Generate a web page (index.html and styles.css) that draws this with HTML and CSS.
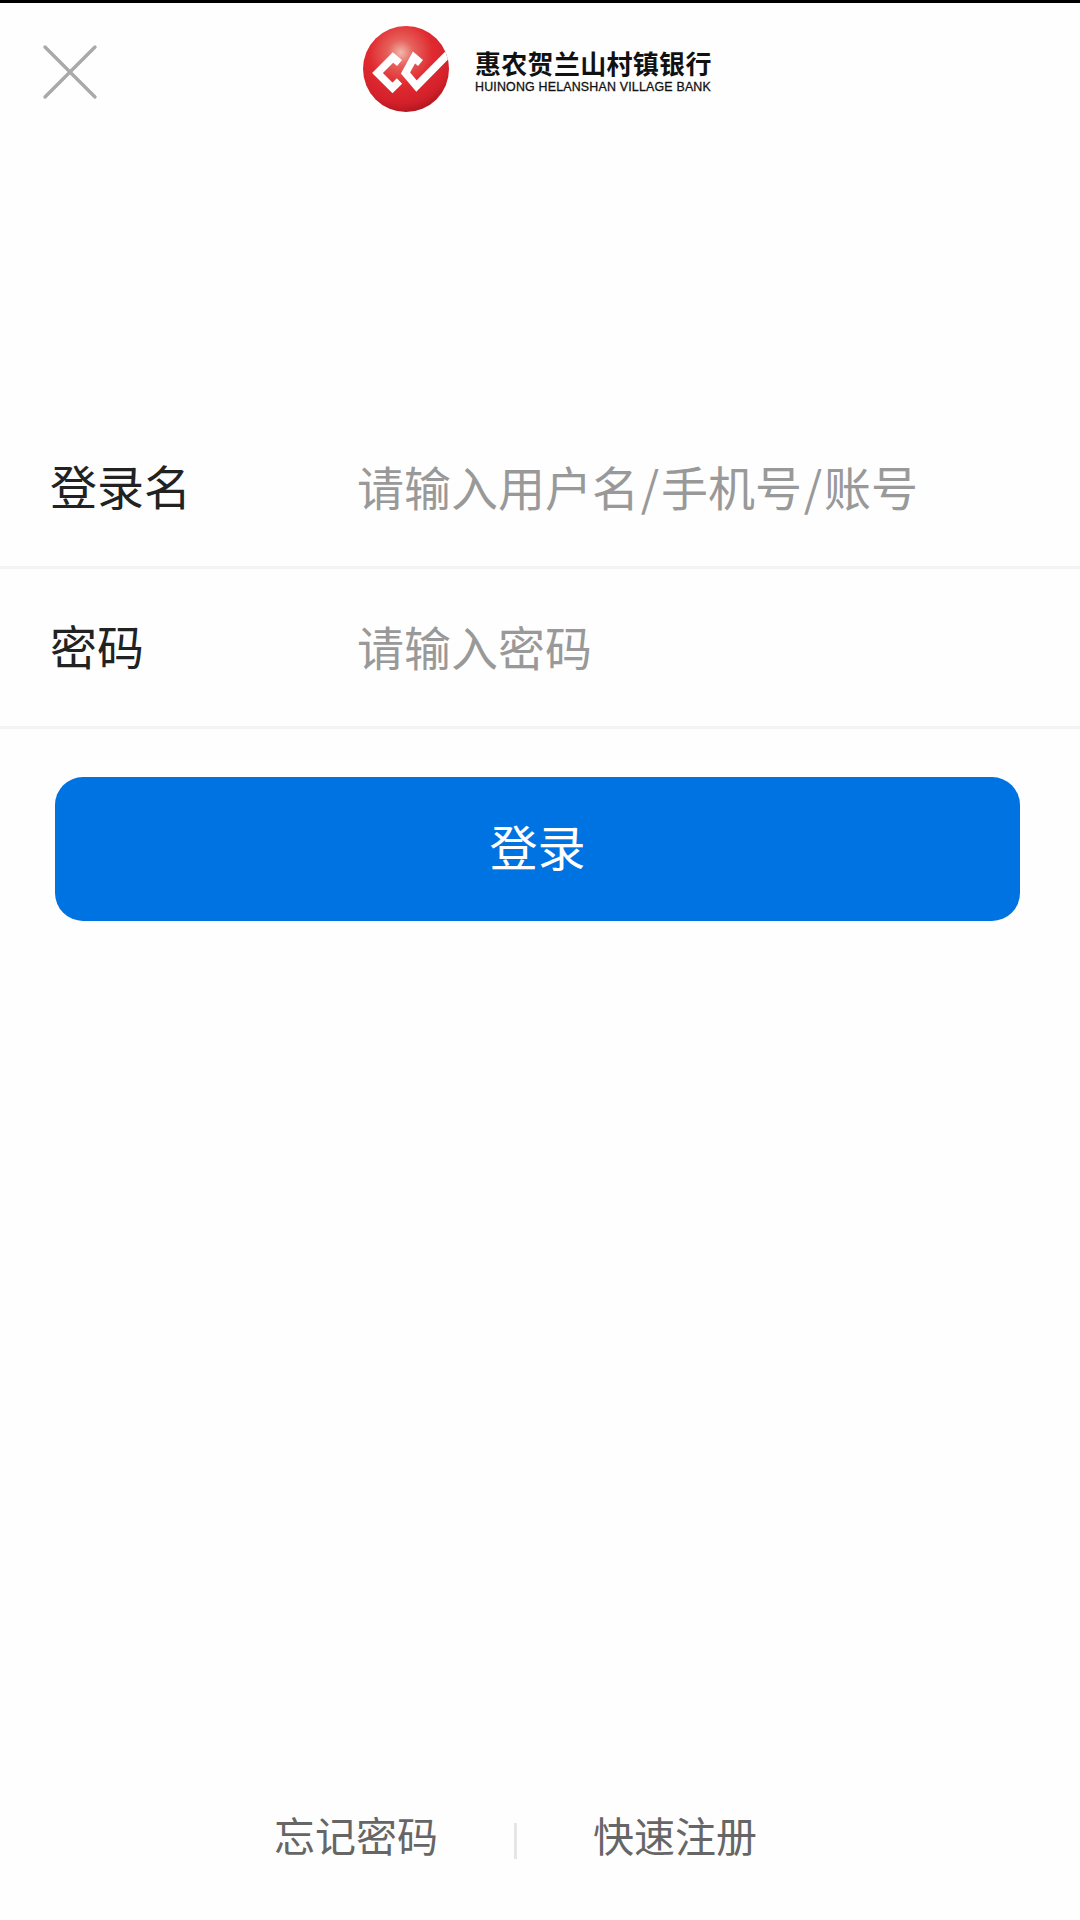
FILE: index.html
```html
<!DOCTYPE html>
<html lang="zh-CN">
<head>
<meta charset="utf-8">
<title>登录</title>
<link rel="stylesheet" href="styles.css">
</head>
<body>
<div class="page">
  <header class="top">
    <button class="close" aria-label="关闭">
      <svg viewBox="0 0 56 56" width="56" height="56"><path d="M3 3 L53 53 M53 3 L3 53" fill="none" stroke="#a9a9a9" stroke-width="3.4" stroke-linecap="round"/></svg>
    </button>
    <div class="brand">
      <svg class="mark" viewBox="0 0 88 88" width="88" height="88">
        <defs>
          <radialGradient id="ball" cx="0.44" cy="0.31" r="0.74">
            <stop offset="0" stop-color="#f0b8ae"/>
            <stop offset="0.2" stop-color="#e6625c"/>
            <stop offset="0.5" stop-color="#e02a30"/>
            <stop offset="0.8" stop-color="#d2202a"/>
            <stop offset="1" stop-color="#a5141c"/>
          </radialGradient>
          <clipPath id="disc"><circle cx="44" cy="44" r="43"/></clipPath>
        </defs>
        <circle cx="44" cy="44" r="43" fill="url(#ball)"/>
        <g clip-path="url(#disc)" fill="none" stroke="#fff" stroke-width="7.6">
          <path d="M37.5 38 L31 32.5 L15.5 48 L30.5 63 L37.5 56"/>
          <path d="M58.5 38 L52 32.5 L43.5 48 L54.5 61 L90 25"/>
        </g>
      </svg>
      <div class="wordmark">
        <span class="wm-cn">惠农贺兰山村镇银行</span>
        <span class="wm-en">HUINONG HELANSHAN VILLAGE BANK</span>
      </div>
    </div>
  </header>

  <form class="form">
    <label class="row">
      <span class="label">登录名</span>
      <span class="hint">请输入用户名<span class="slash">/</span>手机号<span class="slash">/</span>账号</span>
    </label>
    <label class="row">
      <span class="label">密码</span>
      <span class="hint">请输入密码</span>
    </label>
    <button class="submit" type="button">登录</button>
  </form>

  <footer class="links">
    <a class="link">忘记密码</a>
    <span class="sep"></span>
    <a class="link">快速注册</a>
  </footer>
</div>
</body>
</html>
```
FILE: styles.css
```css
* { box-sizing: border-box; }
html, body { margin: 0; padding: 0; }
body {
  width: 1080px;
  height: 1920px;
  background: #fefefe;
  font-family: "Noto Sans CJK SC", "Liberation Sans", sans-serif;
}
.page {
  display: flex;
  flex-direction: column;
  height: 1920px;
  border-top: 3px solid #000;
}
.top {
  display: flex;
  align-items: center;
  height: 132px;
  padding-left: 42px;
}
.close {
  display: flex;
  width: 56px;
  height: 56px;
  margin-top: 6px;
  padding: 0;
  border: 0;
  background: none;
}
.brand {
  display: flex;
  align-items: center;
  margin-left: 264px;
}
.mark { flex: none; }
.wordmark {
  display: flex;
  flex-direction: column;
  margin-top: 3px;
  margin-left: 25px;
  color: #111;
}
.wm-cn {
  font-size: 26px;
  line-height: 32px;
  font-weight: 700;
  letter-spacing: 0.3px;
  white-space: nowrap;
}
.wm-en {
  font-family: "Liberation Sans", sans-serif;
  font-size: 12.4px;
  line-height: 14px;
  margin-top: 1px;
  font-weight: 400;
  letter-spacing: 0.2px;
  -webkit-text-stroke: 0.3px #111;
  white-space: nowrap;
}
.form {
  display: flex;
  flex-direction: column;
  margin-top: 274px;
}
.row {
  display: flex;
  align-items: center;
  height: 160px;
  padding-left: 50px;
  padding-bottom: 7px;
  font-size: 47px;
  border-bottom: 3px solid #f3f3f3;
}
.label {
  width: 307px;
  color: #222;
}
.hint {
  padding-top: 3px;
  color: #999;
}
.slash {
  margin: 0 1.8px;
}
.submit {
  align-self: flex-start;
  width: 965px;
  height: 144px;
  margin: 48px 0 0 55px;
  padding-bottom: 9px;
  border: 0;
  border-radius: 28px;
  background: #0073e3;
  color: #fff;
  font-family: inherit;
  font-size: 48px;
}
.links {
  display: flex;
  align-items: center;
  margin-top: auto;
  margin-bottom: 42px;
  padding-left: 274px;
  font-size: 41px;
  color: #666;
}
.link { padding-bottom: 14px; }
.sep {
  width: 3px;
  height: 36px;
  margin: 0 76px;
  background: #e6e6e6;
}
```
